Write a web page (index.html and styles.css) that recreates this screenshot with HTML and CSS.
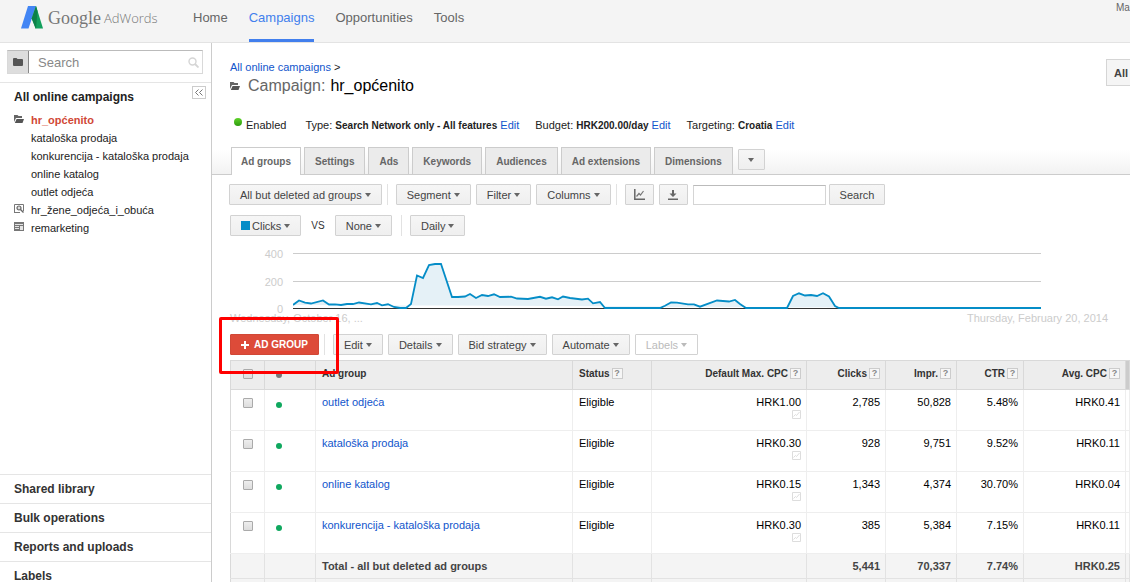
FILE: index.html
```html
<!DOCTYPE html>
<html lang="en">
<head>
<meta charset="utf-8">
<title>Campaign: hr_općenito</title>
<link rel="stylesheet" href="styles.css">
</head>
<body>
<header class="topbar">
  <a class="logo" href="#">
    <svg class="logo-mark" width="22" height="23" viewBox="0 0 22 23" aria-hidden="true">
      <path d="M7 0h8L7.500 22.500H0z" fill="#4285f4"/>
      <path d="M15 0l7 22.500h-7.500L10.700 12.500z" fill="#129f5c"/>
      <path d="M15 0l1.500 5-1.500 18-4.300-10.500z" fill="#0d8048"/>
    </svg>
    <span class="logo-google">Google</span>
    <span class="logo-product">AdWords</span>
  </a>
  <nav class="mainnav">
    <a href="#">Home</a>
    <a href="#" class="current">Campaigns</a>
    <a href="#">Opportunities</a>
    <a href="#">Tools</a>
  </nav>
  <div class="account"><span>Ma</span></div>
</header>
<div class="layout">
  <aside class="sidebar">
    <form class="side-search">
      <button type="button" class="side-folder" aria-label="Browse">
        <svg width="10" height="8" viewBox="0 0 10 8"><path d="M0 1q0-1 1-1h2.500l1 1H9q1 0 1 1v5q0 1-1 1H1q-1 0-1-1z" fill="#555"/></svg>
      </button>
      <input type="text" placeholder="Search" aria-label="Search campaigns">
      <svg class="lens" width="11" height="11" viewBox="0 0 11 11" aria-hidden="true"><circle cx="4.500" cy="4.500" r="3.500" fill="none" stroke="#d5d5d5" stroke-width="1.400"/><path d="M7 7l3.500 3.500" stroke="#d5d5d5" stroke-width="1.800"/></svg>
    </form>
    <div class="side-head">
      <h2>All online campaigns</h2>
      <button type="button" class="collapse" aria-label="Collapse">
        <svg width="8" height="7" viewBox="0 0 8 7"><path d="M3.500.5l-3 3 3 3M7.500.5l-3 3 3 3" fill="none" stroke="#777"/></svg>
      </button>
    </div>
    <ul class="tree">
      <li class="active"><svg width="10" height="8" viewBox="0 0 10 8"><path d="M0 0h3.500l1 1H8v2H2L0 7z" fill="#666"/><path d="M2.600 4H10L8.500 8H.8z" fill="#555"/></svg><a href="#">hr_općenito</a></li>
      <li><a href="#">kataloška prodaja</a></li>
      <li><a href="#">konkurencija - kataloška prodaja</a></li>
      <li><a href="#">online katalog</a></li>
      <li><a href="#">outlet odjeća</a></li>
      <li><svg width="10" height="9" viewBox="0 0 10 9"><path d="M.5 8V.5h9V7M0 8.500h6" fill="none" stroke="#777"/><circle cx="5" cy="4" r="2" fill="#ddd" stroke="#666" stroke-width="1.200"/><path d="M6.500 5.500l3 3" stroke="#666" stroke-width="1.400"/></svg><a href="#">hr_žene_odjeća_i_obuća</a></li>
      <li><svg width="10" height="9" viewBox="0 0 10 9"><path d="M0 0h10v9H0z" fill="#777"/><path d="M1 2h8v1H1zM1 4h4v1H1zM1 6h4v1H1zM6 4h3v4H6z" fill="#e4e4e4"/></svg><a href="#">remarketing</a></li>
    </ul>
    <ul class="side-bottom">
      <li><a href="#">Shared library</a></li>
      <li><a href="#">Bulk operations</a></li>
      <li><a href="#">Reports and uploads</a></li>
      <li><a href="#">Labels</a></li>
    </ul>
  </aside>
  <main class="main">
    <div class="page-head">
      <div>
        <p class="crumb"><a href="#">All online campaigns</a> &gt;</p>
        <h1><svg width="10" height="8" viewBox="0 0 10 8" aria-hidden="true"><path d="M0 0h3.500l1 1H8v2H2L0 7z" fill="#666"/><path d="M2.600 4H10L8.500 8H.8z" fill="#555"/></svg><span class="kind">Campaign:</span> hr_općenito</h1>
      </div>
      <button type="button" class="range">All</button>
    </div>
    <div class="status">
      <span class="enabled"><i class="led"></i>Enabled</span>
      <span>Type: <b>Search Network only - All features</b> <a href="#">Edit</a></span>
      <span>Budget: <b>HRK200.00/day</b> <a href="#">Edit</a></span>
      <span>Targeting: <b>Croatia</b> <a href="#">Edit</a></span>
    </div>
    <nav class="tabs">
      <a href="#" class="on">Ad groups</a>
      <a href="#">Settings</a>
      <a href="#">Ads</a>
      <a href="#">Keywords</a>
      <a href="#">Audiences</a>
      <a href="#">Ad extensions</a>
      <a href="#">Dimensions</a>
      <button type="button" class="btn more" aria-label="More tabs"><i class="caret"></i></button>
    </nav>
    <div class="toolbar">
      <button type="button" class="btn">All but deleted ad groups<i class="caret"></i></button>
      <i class="sep"></i>
      <button type="button" class="btn">Segment<i class="caret"></i></button>
      <button type="button" class="btn">Filter<i class="caret"></i></button>
      <button type="button" class="btn">Columns<i class="caret"></i></button>
      <i class="sep"></i>
      <button type="button" class="btn icon" aria-label="Toggle chart"><svg width="11" height="11" viewBox="0 0 11 11"><path d="M.8 0v10.200H11" fill="none" stroke="#666" stroke-width="1.500"/><path d="M2.500 7.500l2.500-3 1.500 1.500 3-4" fill="none" stroke="#777" stroke-width="1.200"/></svg></button>
      <button type="button" class="btn icon" aria-label="Download"><svg width="10" height="10" viewBox="0 0 10 10"><path d="M4 0h2v3.500h2.500L5 7 1.500 3.500H4zM0 8.500h10V10H0z" fill="#666"/></svg></button>
      <input type="text" class="query" aria-label="Search ad groups">
      <button type="button" class="btn find">Search</button>
    </div>
    <div class="toolbar second">
      <button type="button" class="btn"><i class="swatch"></i>Clicks<i class="caret"></i></button>
      <span class="vs">VS</span>
      <button type="button" class="btn">None<i class="caret"></i></button>
      <i class="sep"></i>
      <button type="button" class="btn">Daily<i class="caret"></i></button>
    </div>
    <section class="chart">
      <div class="axis"><span>400</span><span>200</span><span>0</span></div>
      <svg class="plot" viewBox="293 252 748 58" preserveAspectRatio="none" role="img" aria-label="Daily clicks">
        <path d="M293 253.500h748M293 281.500h748" stroke="#ccc"/>
        <path d="M293 305L299 300.500L305 302.700L311 303.500L323 300.500L329 304.500L335 304.300L341 305L347 304H353L359 302.500L371 304.300L377 303L382 305.300L388 304.300L394 307L400 308H406L411 304L417 275.500L423 278L429 265L435 264H441L452 297H458L465 296.500L470 294L476 298L482 295L488 296L494 294.300L500 297L511 296.700L517 298.500L528 299L540 296.800L546 298.700L552 297.300L558 299.300L563 296.500L570 298L582 299.500L588 298.700L593 303.300L600 302L605 308H660L665 305.700L671 302.500L677 302.700L688 304.300H694L700 306.700L717 300.500L729 301.500L735 300L740 304L746 308H787L793 296L799 293.300L805 295.500L811 295L817 296L823 293.300L829 296.500L835 306L839 308H1041" fill="#e5f1f7"/>
        <path d="M293 308.500h748" stroke="#333"/>
        <path d="M293 305L299 300.500L305 302.700L311 303.500L323 300.500L329 304.500L335 304.300L341 305L347 304H353L359 302.500L371 304.300L377 303L382 305.300L388 304.300L394 307L400 308H406L411 304L417 275.500L423 278L429 265L435 264H441L452 297H458L465 296.500L470 294L476 298L482 295L488 296L494 294.300L500 297L511 296.700L517 298.500L528 299L540 296.800L546 298.700L552 297.300L558 299.300L563 296.500L570 298L582 299.500L588 298.700L593 303.300L600 302L605 308H660L665 305.700L671 302.500L677 302.700L688 304.300H694L700 306.700L717 300.500L729 301.500L735 300L740 304L746 308H787L793 296L799 293.300L805 295.500L811 295L817 296L823 293.300L829 296.500L835 306L839 308H1041" fill="none" stroke="#058dc7" stroke-width="1.800"/>
      </svg>
    </section>
    <div class="dates"><span>Wednesday, October 16, ...</span><span>Thursday, February 20, 2014</span></div>
    <div class="toolbar actions">
      <div class="callout"></div>
      <button type="button" class="btn primary"><svg width="8" height="8" viewBox="0 0 8 8" aria-hidden="true"><path d="M3 0h2v3h3v2H5v3H3V5H0V3h3z" fill="#fff"/></svg>AD GROUP</button>
      <i class="sep"></i>
      <button type="button" class="btn">Edit<i class="caret"></i></button>
      <button type="button" class="btn">Details<i class="caret"></i></button>
      <button type="button" class="btn">Bid strategy<i class="caret"></i></button>
      <button type="button" class="btn">Automate<i class="caret"></i></button>
      <button type="button" class="btn" disabled>Labels<i class="caret"></i></button>
    </div>
    <table class="grid">
      <colgroup><col class="c-check"><col class="c-dot"><col><col class="c-status"><col class="c-cpc"><col class="c-clicks"><col class="c-impr"><col class="c-ctr"><col class="c-avg"><col class="c-edge"></colgroup>
      <thead>
        <tr>
          <th class="mid"><input type="checkbox" aria-label="Select all"></th>
          <th class="state"><i class="dot idle"></i></th>
          <th class="name">Ad group</th>
          <th>Status<i class="help">?</i></th>
          <th class="num">Default Max. CPC<i class="help">?</i></th>
          <th class="num">Clicks<i class="help">?</i></th>
          <th class="num">Impr.<i class="help">?</i></th>
          <th class="num">CTR<i class="help">?</i></th>
          <th class="num">Avg. CPC<i class="help">?</i></th>
          <th class="edge"></th>
        </tr>
      </thead>
      <tbody>
        <tr><td class="mid"><input type="checkbox" aria-label="outlet odjeća"></td><td class="state"><i class="dot"></i></td><td class="name"><a href="#">outlet odjeća</a></td><td>Eligible</td><td class="num">HRK1.00<svg class="sim" width="9" height="9" viewBox="0 0 9 9"><path d="M.5.5h8v8h-8zM1.500 6.500l2-2 1 1 3-3.500" fill="none" stroke="#ddd"/></svg></td><td class="num">2,785</td><td class="num">50,828</td><td class="num">5.48%</td><td class="num">HRK0.41</td><td></td></tr>
        <tr><td class="mid"><input type="checkbox" aria-label="kataloška prodaja"></td><td class="state"><i class="dot"></i></td><td class="name"><a href="#">kataloška prodaja</a></td><td>Eligible</td><td class="num">HRK0.30<svg class="sim" width="9" height="9" viewBox="0 0 9 9"><path d="M.5.5h8v8h-8zM1.500 6.500l2-2 1 1 3-3.500" fill="none" stroke="#ddd"/></svg></td><td class="num">928</td><td class="num">9,751</td><td class="num">9.52%</td><td class="num">HRK0.11</td><td></td></tr>
        <tr><td class="mid"><input type="checkbox" aria-label="online katalog"></td><td class="state"><i class="dot"></i></td><td class="name"><a href="#">online katalog</a></td><td>Eligible</td><td class="num">HRK0.15<svg class="sim" width="9" height="9" viewBox="0 0 9 9"><path d="M.5.5h8v8h-8zM1.500 6.500l2-2 1 1 3-3.500" fill="none" stroke="#ddd"/></svg></td><td class="num">1,343</td><td class="num">4,374</td><td class="num">30.70%</td><td class="num">HRK0.04</td><td></td></tr>
        <tr><td class="mid"><input type="checkbox" aria-label="konkurencija - kataloška prodaja"></td><td class="state"><i class="dot"></i></td><td class="name"><a href="#">konkurencija - kataloška prodaja</a></td><td>Eligible</td><td class="num">HRK0.30<svg class="sim" width="9" height="9" viewBox="0 0 9 9"><path d="M.5.5h8v8h-8zM1.500 6.500l2-2 1 1 3-3.500" fill="none" stroke="#ddd"/></svg></td><td class="num">385</td><td class="num">5,384</td><td class="num">7.15%</td><td class="num">HRK0.11</td><td></td></tr>
      </tbody>
      <tfoot>
        <tr><td></td><td></td><td class="name">Total - all but deleted ad groups</td><td></td><td></td><td class="num">5,441</td><td class="num">70,337</td><td class="num">7.74%</td><td class="num">HRK0.25</td><td></td></tr>
        <tr><td></td><td></td><td></td><td></td><td></td><td></td><td></td><td></td><td></td><td></td></tr>
      </tfoot>
    </table>
  </main>
</div>
</body>
</html>
```
FILE: styles.css
```css
* { box-sizing: border-box; }
html, body { height: 100%; }
body {
  margin: 0;
  display: flex;
  flex-direction: column;
  overflow: hidden;
  font: 11px/14px "Liberation Sans", Arial, sans-serif;
  color: #222;
  background: #fff;
}
a { color: #15c; text-decoration: none; }
h1, h2, p, ul { margin: 0; padding: 0; }
ul { list-style: none; }
button, input { font: inherit; color: inherit; margin: 0; }
i { font-style: normal; }
svg { display: block; flex: none; }

/* Top bar */
.topbar {
  display: flex;
  flex: none;
  height: 43px;
  background: #f4f4f4;
  border-bottom: 1px solid #e3e3e3;
  overflow: hidden;
}
.logo { display: flex; width: 193px; padding: 6px 0 0 21px; color: #777; }
.logo-google { font: 18px/24px "Liberation Serif", serif; margin-left: 5px; }
.logo-product { font: 300 13px/24px "Open Sans", sans-serif; margin-left: 3px; color: #777; }
.mainnav { display: flex; gap: 21px; flex: 1; font-size: 13px; line-height: 35px; }
.mainnav a { color: #666; height: 42px; }
.mainnav .current { color: #427fed; border-bottom: 3px solid #427fed; line-height: 36px; }
.account { width: 14px; padding-top: 1px; font-size: 10px; color: #666; white-space: nowrap; }

.layout { display: flex; flex: 1; min-height: 0; }

/* Sidebar */
.sidebar {
  display: flex;
  flex: none;
  flex-direction: column;
  width: 212px;
  border-right: 1px solid #ccc;
}
.side-search {
  display: flex;
  position: relative;
  flex: none;
  height: 24px;
  margin: 7px 8px 8px 7px;
  border: 1px solid #d9d9d9;
  border-top-color: #bbb;
}
.side-folder {
  display: flex;
  align-items: center;
  justify-content: center;
  width: 21px;
  padding: 0;
  border: 0;
  border-right: 1px solid #888;
  background: #ddd;
}
.side-search input { flex: 1; min-width: 0; border: 0; padding: 2px 9px 0; font-size: 13px; outline: 0; }
.side-search input::placeholder { color: #888; opacity: 1; }
.lens { position: absolute; right: 3px; top: 6px; }
.side-head {
  display: flex;
  justify-content: space-between;
  align-items: flex-start;
  border-top: 1px solid #e5e5e5;
  padding: 3px 5px 0 14px;
}
.side-head h2 { font-size: 12px; line-height: 22px; }
.collapse {
  display: flex;
  align-items: center;
  justify-content: center;
  width: 14px;
  height: 13px;
  padding: 0;
  border: 1px solid #ccc;
  background: #fff;
}
.tree { padding: 3px 0 0 14px; }
.tree li { display: flex; align-items: center; gap: 7px; height: 18px; padding-left: 17px; }
.tree li:has(svg) { padding-left: 0; }
.tree svg { margin-bottom: 3px; }
.tree a { color: #222; }
.tree .active a { color: #d14836; font-weight: bold; }
.side-bottom { margin-top: auto; font-size: 12px; font-weight: bold; height: 108px; }
.side-bottom li { height: 29px; padding-left: 14px; border-top: 1px solid #e5e5e5; line-height: 28px; }
.side-bottom a { color: #333; }

/* Page heading */
.main { flex: 1; min-width: 0; }
.page-head { display: flex; justify-content: space-between; padding: 16px 0 0 18px; overflow: hidden; }
.crumb { line-height: 16px; }
h1 { display: flex; align-items: center; gap: 5px; font-size: 16px; line-height: 22px; font-weight: normal; color: #000; }
h1 svg { margin-right: 3px; }
.kind { color: #666; }
.range {
  width: 24px;
  height: 27px;
  padding: 0 0 0 7px;
  border: 1px solid #d5d5d5;
  border-right: 0;
  background: #f5f5f5;
  font-size: 11px;
  font-weight: bold;
  color: #444;
  white-space: nowrap;
  text-align: left;
}
.status { display: flex; gap: 16px; padding: 20px 0 0 22px; line-height: 16px; }
.status b { font-size: 10px; }
.enabled { display: flex; gap: 4px; margin-right: 3px; }
.led { width: 8px; height: 8px; margin-top: 1px; border-radius: 50%; background: linear-gradient(#5fd32a, #2f9a10); }

/* Tabs */
.tabs {
  display: flex;
  align-items: flex-end;
  gap: 3px;
  height: 41px;
  padding-left: 19px;
  border-bottom: 1px solid #ccc;
  background: linear-gradient(#fff 40%, #f2f2f2);
}
.tabs a {
  height: 27px;
  padding: 0 10px;
  border: 1px solid #ccc;
  border-bottom: 0;
  background: #ebebeb;
  color: #666;
  font-size: 10px;
  font-weight: bold;
  line-height: 27px;
}
.tabs .on { background: #fff; height: 28px; margin-bottom: -1px; padding: 0 9px; }
.tabs .more { width: 27px; margin: 0 0 4px 2px; padding: 0; }

/* Buttons and toolbars */
.btn {
  display: flex;
  align-items: center;
  justify-content: center;
  height: 21px;
  padding: 0 10px;
  border: 1px solid #d2d2d2;
  border-radius: 1px;
  background: linear-gradient(#f6f6f6, #efefef);
  color: #444;
  white-space: nowrap;
}
.caret { border: 3px solid transparent; border-top: 4px solid #666; border-bottom: 0; margin-left: 3px; }
.more .caret { margin: 0; }
.btn:disabled { color: #bbb; background: #fff; }
.btn:disabled .caret { border-top-color: #bbb; }
.toolbar { display: flex; align-items: center; gap: 5px; padding: 9px 0 0 17px; position: relative; }
.sep { width: 1px; height: 21px; margin-right: 3px; background: #e2e2e2; }
.icon { width: 29px; padding: 0; }
.query { width: 133px; height: 20px; border: 1px solid #d5d5d5; border-top-color: #bbb; padding: 0 4px; }
.find { margin-left: -2px; }
.second { padding: 10px 0 0 18px; }
.second .sep { margin-left: 4px; }
.swatch { width: 9px; height: 9px; margin-right: 2px; background: #058dc7; }
.vs { margin: 0 5px; font-size: 10px; color: #333; }

/* Chart */
.chart { display: flex; gap: 10px; margin: 12px 89px 0 18px; }
.axis {
  display: flex;
  flex: none;
  flex-direction: column;
  justify-content: space-between;
  width: 53px;
  margin: -1px 0 -6px;
  line-height: 14px;
  color: #ccc;
  text-align: right;
}
.plot { flex: 1; min-width: 0; height: 58px; margin: 4px 0 0; }
.dates { display: flex; justify-content: space-between; padding: 1px 22px 0 18px; color: #ccc; }
.actions { padding: 9px 0 0 18px; }
.actions .primary { background: #dd4b39; border-color: #d14836; color: #fff; font-weight: bold; font-size: 10px; gap: 5px; }
.callout { position: absolute; left: 7px; top: -8px; width: 120px; height: 57px; border: 3px solid #f00; border-radius: 2px; z-index: 2; pointer-events: none; }

/* Table */
.grid { width: calc(100% - 18px); margin: 5px 0 0 18px; table-layout: fixed; border-collapse: collapse; }
.c-check { width: 34px; }
.c-dot { width: 51px; }
.c-status, .c-clicks { width: 79px; }
.c-cpc { width: 155px; }
.c-impr { width: 71px; }
.c-ctr { width: 67px; }
.c-avg { width: 102px; }
.c-edge { width: 4px; }
.grid th, .grid td { padding: 6px 5px 0 6px; text-align: left; vertical-align: top; border: 1px solid #eee; white-space: nowrap; }
.grid th { height: 29px; background: #ededed; border-color: #d9d9d9; font-size: 10px; color: #333; }
.grid td { height: 41px; padding-top: 5px; color: #000; }
.grid .num { text-align: right; }
.grid .mid { text-align: center; padding: 8px 0 0; }
.grid .state { padding: 12px 0 0 11px; }
.grid thead .state { padding-top: 11px; }
.grid tr > :first-child { border-left-color: #d9d9d9; }
.grid .edge { background: #ccc; padding: 0; }
.grid tfoot td { height: 25px; background: #f4f4f4; border-color: #e2e2e2; font-weight: bold; color: #444; }
.grid input {
  appearance: none;
  display: block;
  width: 10px;
  height: 10px;
  margin: 0 auto;
  border: 1px solid #aaa;
  border-radius: 1px;
  background: linear-gradient(#eee, #ddd);
}
.dot { display: block; width: 6px; height: 6px; border-radius: 50%; background: #0fa85f; }
.idle { background: #777; }
.sim { margin: 1px 0 0 auto; }
.help {
  display: inline-block;
  width: 11px;
  height: 11px;
  margin-left: 2px;
  border: 1px solid #ccc;
  background: #f6f6f6;
  color: #888;
  font-size: 9px;
  line-height: 9px;
  text-align: center;
  vertical-align: 1px;
}
```
